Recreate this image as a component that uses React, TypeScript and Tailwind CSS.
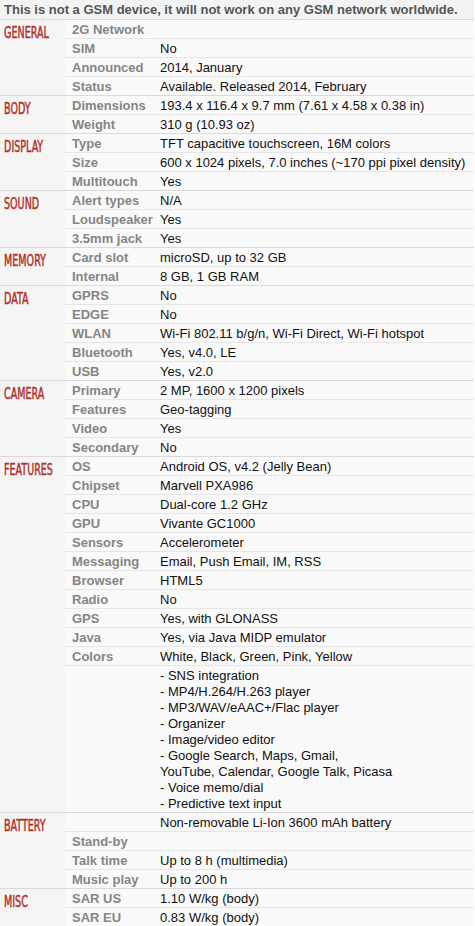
import React from "react";

type Row = { label: string; value: string | string[] };
type Section = { title: string; rows: Row[] };

const specs: Section[] = [
  {
    title: "General",
    rows: [
      { label: "2G Network", value: "" },
      { label: "SIM", value: "No" },
      { label: "Announced", value: "2014, January" },
      { label: "Status", value: "Available. Released 2014, February" },
    ],
  },
  {
    title: "Body",
    rows: [
      { label: "Dimensions", value: "193.4 x 116.4 x 9.7 mm (7.61 x 4.58 x 0.38 in)" },
      { label: "Weight", value: "310 g (10.93 oz)" },
    ],
  },
  {
    title: "Display",
    rows: [
      { label: "Type", value: "TFT capacitive touchscreen, 16M colors" },
      { label: "Size", value: "600 x 1024 pixels, 7.0 inches (~170 ppi pixel density)" },
      { label: "Multitouch", value: "Yes" },
    ],
  },
  {
    title: "Sound",
    rows: [
      { label: "Alert types", value: "N/A" },
      { label: "Loudspeaker", value: "Yes" },
      { label: "3.5mm jack", value: "Yes" },
    ],
  },
  {
    title: "Memory",
    rows: [
      { label: "Card slot", value: "microSD, up to 32 GB" },
      { label: "Internal", value: "8 GB, 1 GB RAM" },
    ],
  },
  {
    title: "Data",
    rows: [
      { label: "GPRS", value: "No" },
      { label: "EDGE", value: "No" },
      { label: "WLAN", value: "Wi-Fi 802.11 b/g/n, Wi-Fi Direct, Wi-Fi hotspot" },
      { label: "Bluetooth", value: "Yes, v4.0, LE" },
      { label: "USB", value: "Yes, v2.0" },
    ],
  },
  {
    title: "Camera",
    rows: [
      { label: "Primary", value: "2 MP, 1600 x 1200 pixels" },
      { label: "Features", value: "Geo-tagging" },
      { label: "Video", value: "Yes" },
      { label: "Secondary", value: "No" },
    ],
  },
  {
    title: "Features",
    rows: [
      { label: "OS", value: "Android OS, v4.2 (Jelly Bean)" },
      { label: "Chipset", value: "Marvell PXA986" },
      { label: "CPU", value: "Dual-core 1.2 GHz" },
      { label: "GPU", value: "Vivante GC1000" },
      { label: "Sensors", value: "Accelerometer" },
      { label: "Messaging", value: "Email, Push Email, IM, RSS" },
      { label: "Browser", value: "HTML5" },
      { label: "Radio", value: "No" },
      { label: "GPS", value: "Yes, with GLONASS" },
      { label: "Java", value: "Yes, via Java MIDP emulator" },
      { label: "Colors", value: "White, Black, Green, Pink, Yellow" },
      {
        label: "",
        value: [
          "- SNS integration",
          "- MP4/H.264/H.263 player",
          "- MP3/WAV/eAAC+/Flac player",
          "- Organizer",
          "- Image/video editor",
          "- Google Search, Maps, Gmail,",
          "YouTube, Calendar, Google Talk, Picasa",
          "- Voice memo/dial",
          "- Predictive text input",
        ],
      },
    ],
  },
  {
    title: "Battery",
    rows: [
      { label: "", value: "Non-removable Li-Ion 3600 mAh battery" },
      { label: "Stand-by", value: "" },
      { label: "Talk time", value: "Up to 8 h (multimedia)" },
      { label: "Music play", value: "Up to 200 h" },
    ],
  },
  {
    title: "Misc",
    rows: [
      { label: "SAR US", value: "1.10 W/kg (body)" },
      { label: "SAR EU", value: "0.83 W/kg (body)" },
    ],
  },
];

function SpecRow({ row, first }: { row: Row; first: boolean }) {
  const multi = Array.isArray(row.value);
  return (
    <div className={`flex ${first ? "" : "border-t border-[#e6e6e6]"}`}>
      <div className="w-[90px] shrink-0 pl-[7px] font-bold text-[#858585] h-[18px] leading-[20px]">
        {row.label}
      </div>
      {multi ? (
        <div className="flex-1 pl-[5px] pt-[2px] leading-[16px] text-[#111]">
          {(row.value as string[]).map((line) => (
            <div key={line}>{line}</div>
          ))}
        </div>
      ) : (
        <div className="flex-1 pl-[5px] h-[18px] leading-[20px] text-[#111] whitespace-nowrap">
          {row.value}
        </div>
      )}
    </div>
  );
}

export default function App() {
  return (
    <div className="w-[475px] h-[926px] overflow-hidden bg-white font-['Liberation_Sans',Arial,sans-serif] text-[13px]">
      <div className="w-[474px] bg-[#f9f9f9]">
        {/* warning strip */}
        <div className="h-[19px] leading-[19px] pl-[4px] bg-[#f3f3f3] font-bold text-[#555]">
          This is not a GSM device, it will not work on any GSM network worldwide.
        </div>

        {specs.map((section) => (
          <div key={section.title} className="flex border-t border-[#dadada]">
            <div className="w-[65px] shrink-0 bg-[#f4f4f4] pl-[4px] pt-[4px]">
              <span className="inline-block origin-left scale-x-[0.71] uppercase text-[15px] leading-[18px] text-[#b2302b] [-webkit-text-stroke:0.45px_#b2302b] font-['Liberation_Sans_Narrow','DejaVu_Sans_Condensed','Liberation_Sans',sans-serif]">
                {section.title}
              </span>
            </div>
            <div className="flex-1">
              {section.rows.map((row, i) => (
                <SpecRow key={section.title + i} row={row} first={i === 0} />
              ))}
            </div>
          </div>
        ))}
      </div>
    </div>
  );
}
